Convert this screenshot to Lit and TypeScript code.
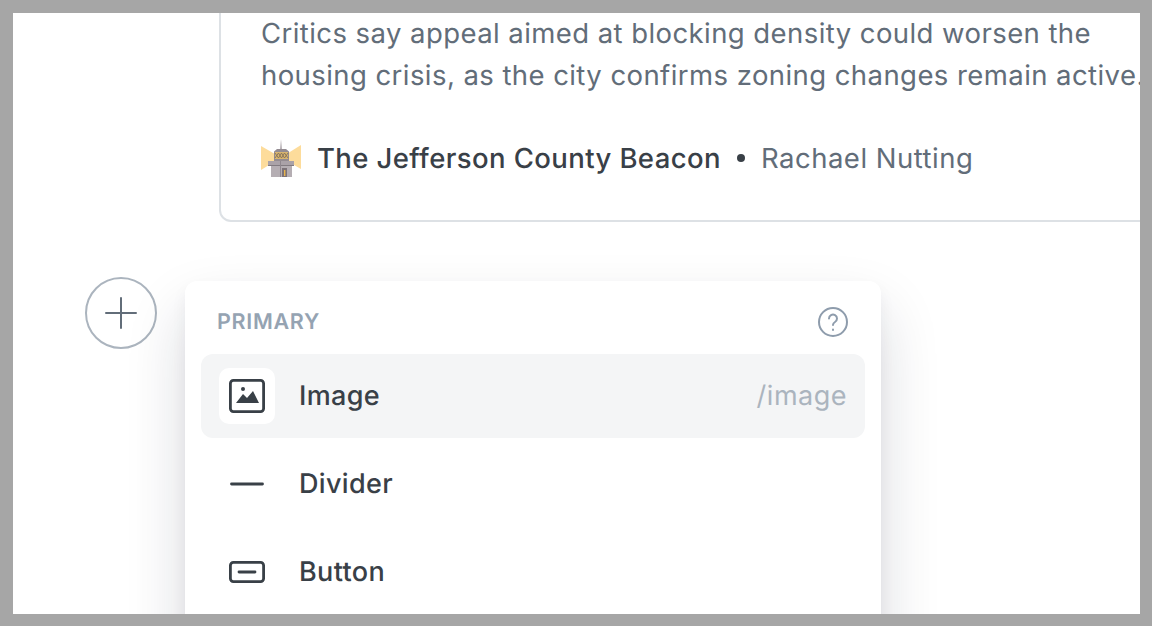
import { LitElement, html, css } from 'lit';
import { customElement } from 'lit/decorators.js';

const lighthouse = html`<svg class="logo" viewBox="0 0 40 38" width="40" height="38">
  <path d="M0 7l20 11.500L0 31zM40 6L20 18.500 40 30z" fill="#fddc9b"/>
  <path d="M19 11l1-11 1 11z" fill="#b0a9ae"/>
  <path d="M13 12.500l3-2.500h9l3 2.500v9.500H13z" fill="#948c92"/>
  <rect x="14" y="13" width="13" height="7" fill="#d9b56e"/>
  <path d="M14 14l3.500 5 3-5 3 5 3.500-5M14 19l3.500-5 3 5 3-5 3.500 5" fill="none" stroke="#7b6a58" stroke-width=".8"/>
  <rect x="7" y="22" width="26" height="5" fill="#aaa2a8"/>
  <rect x="7" y="26" width="26" height="1" fill="#827b81"/>
  <rect x="10" y="27" width="21" height="11" fill="#b5aeb3"/>
  <rect x="19" y="22" width="1" height="16" fill="#8f878e"/>
  <rect x="21" y="29" width="5" height="9" fill="#7d7378"/>
  <rect x="23" y="31" width="1.400" height="6" fill="#e9b44c"/>
</svg>`;

@customElement('app-root')
export class AppRoot extends LitElement {
  static styles = css`
    :host {
      display: block;
      width: 1152px;
      height: 626px;
      box-sizing: border-box;
      padding: 13px 12px 12px 13px;
      background: #a6a6a6;
      font-family: Inter, 'Liberation Sans', sans-serif;
      text-rendering: geometricPrecision;
    }

    .page {
      height: 100%;
      background: #fff;
      overflow: hidden;
    }

    .card {
      box-sizing: border-box;
      width: 1100px;
      height: 210px;
      margin-left: 206px;
      padding-left: 40px;
      border: 2px solid #dde1e5;
      border-top: 0;
      border-radius: 0 0 12px 12px;
    }

    .excerpt {
      margin: -1px 0 0;
      width: 900px;
      font-size: 27.5px;
      line-height: 42px;
      letter-spacing: 0.43px;
      color: #626d79;
    }

    .byline {
      display: flex;
      align-items: center;
      margin-top: 41px;
      font-size: 27.5px;
      line-height: 42px;
      letter-spacing: 0.5px;
      white-space: nowrap;
    }

    .logo {
      flex: none;
      margin-right: 16px;
    }

    .publication {
      color: #394047;
      font-weight: 500;
      letter-spacing: 0.4px;
    }

    .dot {
      width: 8px;
      height: 8px;
      margin: 0 16px;
      border-radius: 50%;
      background: #394047;
    }

    .author {
      color: #626d79;
    }

    .insert {
      display: flex;
      align-items: flex-start;
      margin: 55px 0 0 72px;
    }

    .plus {
      flex: none;
      box-sizing: border-box;
      display: flex;
      align-items: center;
      justify-content: center;
      width: 72px;
      height: 72px;
      border: 2px solid #abb4be;
      border-radius: 50%;
    }

    .menu {
      flex: none;
      box-sizing: border-box;
      width: 696px;
      height: 400px;
      margin: 4px 0 0 28px;
      padding: 0 16px;
      border-radius: 12px;
      background: #fff;
      box-shadow: 0 8px 16px rgba(20, 25, 50, 0.05), 0 30px 60px rgba(20, 25, 50, 0.16);
    }

    .menu-head {
      display: flex;
      align-items: center;
      justify-content: space-between;
      height: 73px;
      box-sizing: border-box;
      padding: 15px 17px 7px 16px;
      font-size: 21.5px;
      font-weight: 600;
      letter-spacing: 0.7px;
      color: #95a3b2;
    }

    .item {
      display: flex;
      align-items: center;
      height: 84px;
      margin-bottom: 4px;
      padding: 0 18px;
      border-radius: 12px;
      font-size: 27px;
      line-height: 82px;
      font-weight: 500;
      letter-spacing: 0.35px;
      color: #394047;
    }

    .item.active {
      background: #f4f5f6;
    }

    .tile {
      flex: none;
      display: flex;
      align-items: center;
      justify-content: center;
      width: 56px;
      height: 56px;
      margin-right: 24px;
      border-radius: 10px;
    }

    .item.active .tile {
      background: #fff;
    }

    .label {
      flex: 1;
    }

    .shortcut {
      font-weight: 400;
      letter-spacing: 0.5px;
      color: #abb4be;
    }
  `;

  render() {
    return html`
      <div class="page">
        <div class="card">
          <p class="excerpt">
            Critics say appeal aimed at blocking density could worsen the housing crisis, as the city confirms zoning changes remain active.
          </p>
          <div class="byline">
            ${lighthouse}
            <span class="publication">The Jefferson County Beacon</span>
            <span class="dot"></span>
            <span class="author">Rachael Nutting</span>
          </div>
        </div>
        <div class="insert">
          <div class="plus">
            <svg width="32" height="32" viewBox="0 0 32 32" fill="none" stroke="#626d79" stroke-width="2" stroke-linecap="round">
              <path d="M16 1v30M1 16h30"/>
            </svg>
          </div>
          <div class="menu">
            <div class="menu-head">
              <span>PRIMARY</span>
              <svg width="30" height="30" viewBox="0 0 30 30" fill="none" stroke="#8e9cac" stroke-width="2" stroke-linecap="round">
                <circle cx="15" cy="15" r="14"/>
                <path d="M11 11.500a4 4 0 1 1 6 3.500c-1.400.8-2 1.500-2 3"/>
                <path d="M15 22.500v.5"/>
              </svg>
            </div>
            <div class="item active">
              <div class="tile">
                <svg width="36" height="34" viewBox="0 0 36 34" fill="none">
                  <rect x="1.400" y="1.400" width="33.200" height="31.200" rx="3" stroke="#394047" stroke-width="2.800"/>
                  <circle cx="14" cy="10" r="2" fill="#394047"/>
                  <path d="M7 24l7-9 4 4 6-7 6 12z" fill="#394047"/>
                </svg>
              </div>
              <span class="label">Image</span>
              <span class="shortcut">/image</span>
            </div>
            <div class="item">
              <div class="tile">
                <svg width="34" height="4" viewBox="0 0 34 4">
                  <path d="M1.500 2h31" stroke="#394047" stroke-width="2.800" stroke-linecap="round"/>
                </svg>
              </div>
              <span class="label">Divider</span>
            </div>
            <div class="item">
              <div class="tile">
                <svg width="36" height="22" viewBox="0 0 36 22" fill="none" stroke="#394047" stroke-width="2.800">
                  <rect x="1.400" y="1.400" width="33.200" height="19.200" rx="3"/>
                  <path d="M10 11h16" stroke-linecap="round"/>
                </svg>
              </div>
              <span class="label">Button</span>
            </div>
          </div>
        </div>
      </div>
    `;
  }
}
